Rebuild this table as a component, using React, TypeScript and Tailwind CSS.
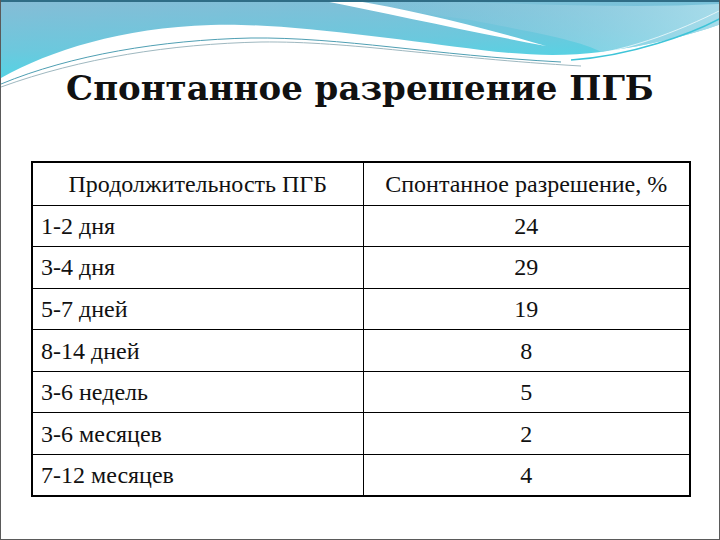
const rows = [
  { term: "1-2 дня", value: "24" },
  { term: "3-4 дня", value: "29" },
  { term: "5-7 дней", value: "19" },
  { term: "8-14 дней", value: "8" },
  { term: "3-6 недель", value: "5" },
  { term: "3-6 месяцев", value: "2" },
  { term: "7-12 месяцев", value: "4" },
]

function Wave() {
  return (
    <svg className="absolute left-0 top-0" width="720" height="90" viewBox="0 0 720 90">
      <defs>
        <linearGradient id="sky" x1="0" y1="0" x2="0.3" y2="1">
          <stop offset="0" stopColor="#86bcd6" />
          <stop offset="0.6" stopColor="#6cc8dd" />
          <stop offset="1" stopColor="#4fd6e6" />
        </linearGradient>
        <linearGradient id="skyRight" x1="0" y1="0" x2="1" y2="0">
          <stop offset="0" stopColor="#86bcd6" stopOpacity="0" />
          <stop offset="1" stopColor="#b4e2ee" stopOpacity="0.8" />
        </linearGradient>
      </defs>
      <path
        d="M0,78 C50,50 120,28 210,25 C280,22 400,40 480,50 C520,55 560,57 600,52 C650,45 690,35 720,24 V0 H0 Z"
        fill="url(#sky)"
      />
      <path
        d="M330,0 C470,0 600,10 720,4 V24 C690,35 650,45 600,52 C580,40 520,30 470,20 Z"
        fill="url(#skyRight)"
      />
      <path d="M318,0 C390,14 460,30 545,46 C470,24 410,10 350,0 Z" fill="#ffffff" />
      <path d="M0,84 C70,55 160,40 250,38 C340,37 430,55 560,62" fill="none" stroke="#4f9fb3" strokeWidth="1" />
      <path d="M0,87 C80,58 170,44 260,42 C350,41 440,58 580,66" fill="none" stroke="#9fb8c0" strokeWidth="1" />
      <path d="M560,58 C620,55 680,30 720,10" fill="none" stroke="#ffffff" strokeWidth="1" strokeOpacity="0.7" />
      <path d="M570,60 C630,56 690,34 720,18" fill="none" stroke="#3ec4d8" strokeWidth="1.5" />
      <rect x="0" y="0" width="720" height="2" fill="#2f6d86" />
    </svg>
  )
}

export default function App() {
  return (
    <div className="relative w-[720px] h-[540px] overflow-hidden bg-white border-x border-b border-[#5a5a5a] font-['Liberation_Serif'] text-[#111]">
      <Wave />
      <div className="relative flex flex-col items-center">
        <h1 className="mt-[66px] text-[34px] leading-[44px] font-bold font-['DejaVu_Serif']">
          Спонтанное разрешение ПГБ
        </h1>
      </div>
      <div className="relative mt-[51px] ml-[30px] w-[660px]">
        <table className="w-full border-collapse border-2 border-black text-[24px]">
          <thead>
            <tr className="h-[43px]">
              <th className="w-[331px] border border-black font-normal text-center">Продолжительность ПГБ</th>
              <th className="border border-black font-normal text-center">Спонтанное разрешение, %</th>
            </tr>
          </thead>
          <tbody>
            {rows.map((r) => (
              <tr key={r.term} className="h-[41.6px]">
                <td className="border border-black pl-[8px] text-left">{r.term}</td>
                <td className="border border-black text-center">{r.value}</td>
              </tr>
            ))}
          </tbody>
        </table>
      </div>
    </div>
  )
}
